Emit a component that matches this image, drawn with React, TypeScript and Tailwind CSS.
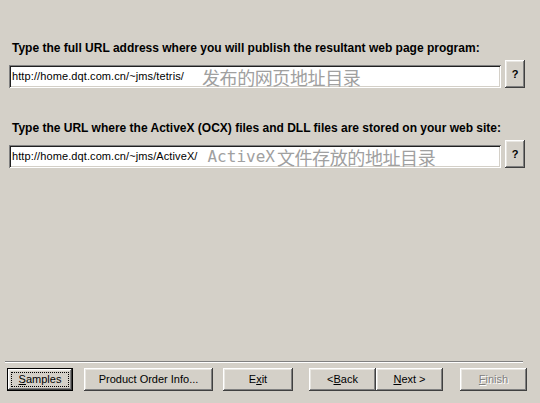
import React from "react";

const raised =
  "shadow-[inset_-1px_-1px_#404040,inset_1px_1px_#ffffff,inset_-2px_-2px_#808080,inset_2px_2px_#e8e6e1]";
const sunken =
  "shadow-[inset_1px_1px_#808080,inset_-1px_-1px_#ffffff,inset_2px_2px_#202020,inset_-2px_-2px_#d4d0c8]";

function Btn({
  children,
  w,
  def,
  disabled,
}: {
  children: React.ReactNode;
  w: string;
  def?: boolean;
  disabled?: boolean;
}) {
  if (def) {
    return (
      <div className={`${w} h-[23px] border border-black bg-[#d4d0c8] flex`}>
        <div className={`flex-1 ${raised} p-[3px] flex`}>
          <div className="flex-1 border border-dotted border-black flex items-center justify-center text-black">
            {children}
          </div>
        </div>
      </div>
    );
  }
  return (
    <div
      className={`${w} h-[23px] bg-[#d4d0c8] ${raised} flex items-center justify-center ${
        disabled ? "text-[#808080] [text-shadow:1px_1px_0_#ffffff]" : "text-black"
      }`}
    >
      {children}
    </div>
  );
}

function UrlRow({ url, children }: { url: string; children: React.ReactNode }) {
  return (
    <div className="mt-[5px] ml-[9px] flex items-end gap-[4px]">
      <div className={`w-[492px] h-[23px] bg-white ${sunken} flex items-center pl-[3px] whitespace-nowrap overflow-hidden`}>
        <span className="text-[11px] tracking-[0.1px] text-black">{url}</span>
        {children}
      </div>
      <div className={`w-[20px] h-[28px] bg-[#d4d0c8] ${raised} flex items-center justify-center font-bold text-[11px] text-black`}>
        ?
      </div>
    </div>
  );
}

export default function App() {
  return (
    <div className="w-[540px] h-[403px] bg-[#d4d0c8] flex flex-col font-['Liberation_Sans',Arial,sans-serif] text-[11px] leading-[13px] text-black overflow-hidden">
      <div className="pt-[42px] pl-[12px] font-bold text-[12px] h-[55px] whitespace-nowrap">
        Type the full URL address where you will publish the resultant web page program:
      </div>
      <UrlRow url="http://home.dqt.com.cn/~jms/tetris/">
        <span className="ml-[18px] tracking-[-0.4px] text-[18px] leading-[20px] text-[#a0a0a0] font-['Noto_Sans_CJK_SC',sans-serif]">
          发布的网页地址目录
        </span>
      </UrlRow>
      <div className="mt-[34px] pl-[12px] font-bold text-[12px] h-[13px] whitespace-nowrap">
        Type the URL where the ActiveX (OCX) files and DLL files are stored on your web site:
      </div>
      <UrlRow url="http://home.dqt.com.cn/~jms/ActiveX/">
        <span className="ml-[10px] text-[16px] leading-[20px] text-[#a0a0a0] font-['DejaVu_Sans_Mono',monospace]">
          ActiveX
        </span>
        <span className="ml-[2px] tracking-[-0.4px] text-[18px] leading-[20px] text-[#a0a0a0] font-['Noto_Sans_CJK_SC',sans-serif]">
          文件存放的地址目录
        </span>
      </UrlRow>
      <div className="mt-auto ml-[5px] w-[518px] h-[2px] border-t border-t-[#808080] border-b border-b-white" />
      <div className="mt-[5px] mb-[12px] ml-[7px] flex items-center">
        <Btn w="w-[66px]" def>
          <span>
            <span className="underline">S</span>amples
          </span>
        </Btn>
        <div className="ml-[11px]">
          <Btn w="w-[129px]">Product Order Info...</Btn>
        </div>
        <div className="ml-[10px]">
          <Btn w="w-[70px]">
            <span>
              E<span className="underline">x</span>it
            </span>
          </Btn>
        </div>
        <div className="ml-[16px]">
          <Btn w="w-[67px]">
            <span>
              &lt;<span className="underline">B</span>ack
            </span>
          </Btn>
        </div>
        <Btn w="w-[67px]">
          <span>
            <span className="underline">N</span>ext &gt;
          </span>
        </Btn>
        <div className="ml-[17px]">
          <Btn w="w-[67px]" disabled>
            <span>
              <span className="underline">F</span>inish
            </span>
          </Btn>
        </div>
      </div>
    </div>
  );
}
